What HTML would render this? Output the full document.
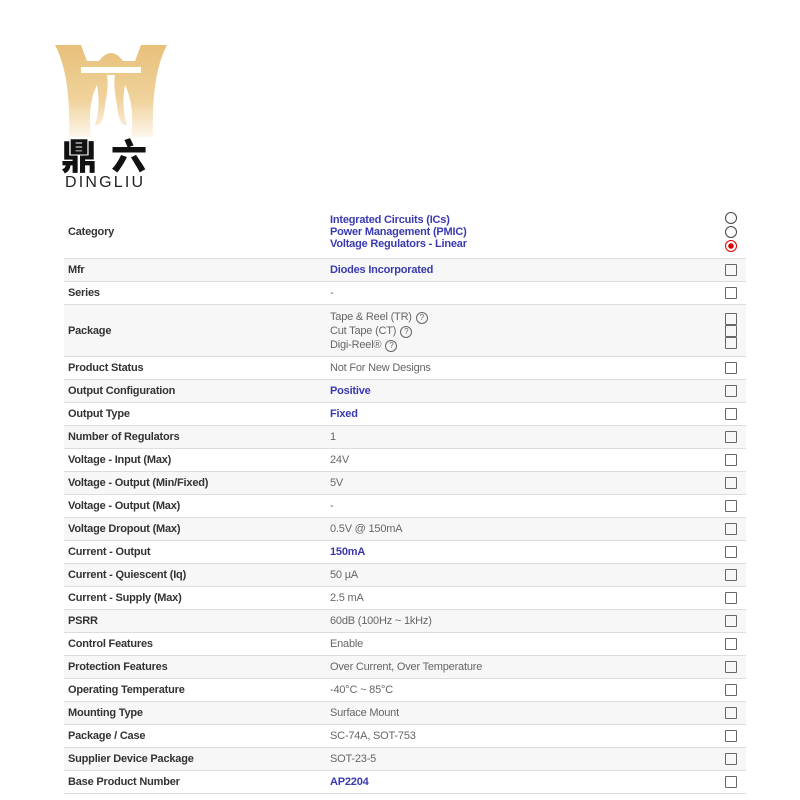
<!DOCTYPE html>
<html><head><meta charset="utf-8"><style>
body{margin:0;width:800px;height:800px;background:#fff;position:relative;font-family:"Liberation Sans",Arial,sans-serif;overflow:hidden}
.logo{position:absolute;left:55px;top:45px}
.cn{position:absolute;left:61px;top:134px;font-family:"Noto Sans CJK SC",sans-serif;font-weight:900;font-size:36px;letter-spacing:14px;color:#111;line-height:40px}
.en{position:absolute;left:65px;top:174px;font-size:16px;letter-spacing:2.2px;color:#222}
table{position:absolute;left:64px;top:205px;width:682px;border-collapse:collapse;font-size:11px;letter-spacing:-0.2px}
td{border-bottom:1px solid #ddd;height:22px;padding:0;vertical-align:middle}
tr:nth-child(even) td{background:#f7f7f7}
td.l{width:262px;padding-left:4px;font-weight:bold;color:#333}
td.v{color:#666}
td.v b{color:#3a3ab0}
td.c{width:30px;text-align:center}
.cb{display:inline-block;width:10px;height:10px;border:1px solid #666;border-radius:1px;vertical-align:middle}
.rd{display:block;width:10px;height:10px;border:1px solid #444;border-radius:50%;margin:2px auto 1px}
.q{display:inline-block;width:10px;height:10px;border:1px solid #666;border-radius:50%;font-size:8px;line-height:10px;text-align:center;margin-left:4px;color:#666}
</style></head><body>
<svg class="logo" width="112" height="92" viewBox="0 0 112 92">
<defs><linearGradient id="g" x1="0" y1="0" x2="0" y2="1"><stop offset="0" stop-color="#e8c07a"/><stop offset="0.6" stop-color="#f0d39c"/><stop offset="1" stop-color="#fdf6ec"/></linearGradient></defs>
<path fill="url(#g)" d="M0 0H26L32 16H44Q50 8 56 8Q62 8 68 16H80L86 0H112Q96 30 98 92H76Q80 60 70 40Q66 62 72 80Q64 82 62 60Q58 40 60 30H52Q54 40 50 60Q48 82 40 80Q46 62 42 40Q32 60 36 92H14Q16 30 0 0Z M26 22V28H86V22Z" fill-rule="evenodd"/>
</svg>
<div class="cn">鼎六</div>
<div class="en">DINGLIU</div>
<table>
<tr><td class="l" style="height:53px">Category</td><td class="v" style="line-height:12px"><b>Integrated Circuits (ICs)<br>Power Management (PMIC)<br>Voltage Regulators - Linear</b></td><td class="c"><span class="rd"></span><span class="rd"></span><span class="rd" style="border-color:#d00;background:radial-gradient(#d00 0 2.5px,#fff 3px)"></span></td></tr>
<tr><td class="l">Mfr</td><td class="v"><b>Diodes Incorporated</b></td><td class="c"><span class="cb"></span></td></tr>
<tr><td class="l">Series</td><td class="v">-</td><td class="c"><span class="cb"></span></td></tr>
<tr><td class="l" style="height:51px">Package</td><td class="v" style="line-height:14px">Tape &amp; Reel (TR)<span class="q">?</span><br>Cut Tape (CT)<span class="q">?</span><br>Digi-Reel®<span class="q">?</span></td><td class="c" style="line-height:0"><span class="cb"></span><br><span class="cb"></span><br><span class="cb"></span></td></tr>
<tr><td class="l">Product Status</td><td class="v">Not For New Designs</td><td class="c"><span class="cb"></span></td></tr>
<tr><td class="l">Output Configuration</td><td class="v"><b>Positive</b></td><td class="c"><span class="cb"></span></td></tr>
<tr><td class="l">Output Type</td><td class="v"><b>Fixed</b></td><td class="c"><span class="cb"></span></td></tr>
<tr><td class="l">Number of Regulators</td><td class="v">1</td><td class="c"><span class="cb"></span></td></tr>
<tr><td class="l">Voltage - Input (Max)</td><td class="v">24V</td><td class="c"><span class="cb"></span></td></tr>
<tr><td class="l">Voltage - Output (Min/Fixed)</td><td class="v">5V</td><td class="c"><span class="cb"></span></td></tr>
<tr><td class="l">Voltage - Output (Max)</td><td class="v">-</td><td class="c"><span class="cb"></span></td></tr>
<tr><td class="l">Voltage Dropout (Max)</td><td class="v">0.5V @ 150mA</td><td class="c"><span class="cb"></span></td></tr>
<tr><td class="l">Current - Output</td><td class="v"><b>150mA</b></td><td class="c"><span class="cb"></span></td></tr>
<tr><td class="l">Current - Quiescent (Iq)</td><td class="v">50 µA</td><td class="c"><span class="cb"></span></td></tr>
<tr><td class="l">Current - Supply (Max)</td><td class="v">2.5 mA</td><td class="c"><span class="cb"></span></td></tr>
<tr><td class="l">PSRR</td><td class="v">60dB (100Hz ~ 1kHz)</td><td class="c"><span class="cb"></span></td></tr>
<tr><td class="l">Control Features</td><td class="v">Enable</td><td class="c"><span class="cb"></span></td></tr>
<tr><td class="l">Protection Features</td><td class="v">Over Current, Over Temperature</td><td class="c"><span class="cb"></span></td></tr>
<tr><td class="l">Operating Temperature</td><td class="v">-40°C ~ 85°C</td><td class="c"><span class="cb"></span></td></tr>
<tr><td class="l">Mounting Type</td><td class="v">Surface Mount</td><td class="c"><span class="cb"></span></td></tr>
<tr><td class="l">Package / Case</td><td class="v">SC-74A, SOT-753</td><td class="c"><span class="cb"></span></td></tr>
<tr><td class="l">Supplier Device Package</td><td class="v">SOT-23-5</td><td class="c"><span class="cb"></span></td></tr>
<tr><td class="l">Base Product Number</td><td class="v"><b>AP2204</b></td><td class="c"><span class="cb"></span></td></tr>
</table>
</body></html>
